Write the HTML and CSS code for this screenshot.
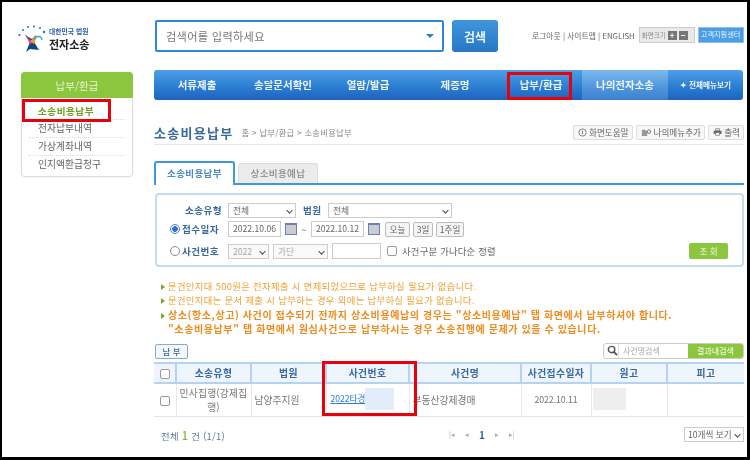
FILE: index.html
```html
<!DOCTYPE html>
<html lang="ko">
<head>
<meta charset="utf-8">
<title>소송비용납부</title>
<link rel="stylesheet" href="styles.css">
</head>
<body>
<div class="frame">
  <div class="page">
    <aside class="side">
      <div class="logo">
        <svg class="logo-mark" viewBox="0 0 28 27" width="28" height="27">
          <g fill="#2a6fbb"><circle cx="1.5" cy="10" r="1.1"/><circle cx="5" cy="5" r="1"/><circle cx="10" cy="2" r="1"/><circle cx="16" cy="1.5" r="1"/><circle cx="22" cy="3" r="1"/><circle cx="26" cy="7" r="1.2"/></g>
          <path d="M7 10 L14 14 L18 10 L16 17 L21 25 L12 24 L8 27 L12 17 Z" fill="#16457e"/>
          <path d="M7 9 L15 18 L12 19 Z" fill="#e0398a"/>
          <path d="M12 16 L19 10 L16 19 Z" fill="#f39a1e"/>
          <path d="M17 15 a3.5 3.5 0 0 1 7 0" fill="none" stroke="#3aa7d8" stroke-width="1.3"/>
        </svg>
        <div class="logo-text"><span class="logo-small">대한민국 법원</span><span class="logo-big">전자소송</span></div>
      </div>
      <nav class="side-box">
        <h2 class="side-head">납부/환급</h2>
        <ul class="side-list">
          <li class="on">소송비용납부</li>
          <li>전자납부내역</li>
          <li>가상계좌내역</li>
          <li>인지액환급청구</li>
        </ul>
      </nav>
    </aside>
    <main class="main">
      <div class="top">
        <div class="searchbox"><span>검색어를 입력하세요</span><i class="caret"></i></div>
        <button class="search-btn">검색</button>
        <div class="toplinks">
          <span>로그아웃 | 사이트맵 | ENGLISH</span>
          <span class="zoombox">화면크기 <b>+</b><b>−</b></span>
          <span class="help">고객지원센터</span>
        </div>
      </div>
      <nav class="gnb">
        <a class="g1">서류제출</a><a class="g2">송달문서확인</a><a class="g3">열람/발급</a><a class="g4">제증명</a><a class="g5">납부/환급</a><a class="g6">나의전자소송</a><a class="g7">✦ 전체메뉴보기</a>
      </nav>
      <div class="titlebar">
        <h1>소송비용납부</h1>
        <span class="crumb">홈 &gt; 납부/환급 &gt; 소송비용납부</span>
        <div class="tools">
          <span class="tool"><svg viewBox="0 0 10 10" width="9" height="9"><circle cx="5" cy="5" r="4" fill="none" stroke="#777"/><path d="M5 3v4" stroke="#777"/></svg>화면도움말</span>
          <span class="tool"><svg viewBox="0 0 12 10" width="11" height="9"><path d="M1 9V2h4v1h2v6z" fill="#999"/><circle cx="9" cy="4" r="2" fill="none" stroke="#666"/></svg>나의메뉴추가</span>
          <span class="tool"><svg viewBox="0 0 14 10" width="13" height="10"><path d="M4 0h6v3H4z" fill="none" stroke="#666"/><path d="M1 3h12v5H1z" fill="#666"/><path d="M4 6h6v4H4z" fill="#fff" stroke="#666"/></svg>출력</span>
        </div>
      </div>
      <div class="tabs">
        <span class="tab on">소송비용납부</span>
        <span class="tab">상소비용예납</span>
      </div>
      <form class="filter">
        <div class="f-row r1">
          <label class="f-label l1">소송유형</label>
          <span class="sel w68">전체<i></i></span>
          <label class="f-label court">법원</label>
          <span class="sel w124">전체<i></i></span>
        </div>
        <div class="f-row r2">
          <span class="radio on"></span><label class="f-label dt">접수일자</label>
          <span class="inp">2022.10.06</span><i class="cal"></i><span class="tilde">~</span><span class="inp">2022.10.12</span><i class="cal"></i>
          <span class="mini m1">오늘</span><span class="mini m2">3일</span><span class="mini m3">1주일</span>
        </div>
        <div class="f-row r3">
          <span class="radio"></span><label class="f-label dt">사건번호</label>
          <span class="sel dim w41">2022<i></i></span><span class="sel dim w55">가단<i></i></span><span class="inp blank"></span>
          <span class="check"></span><span class="sort">사건구분 가나다순 정렬</span>
          <button type="button" class="query">조 회</button>
        </div>
      </form>
      <ul class="notes">
        <li>문건인지대 500원은 전자제출 시 면제되었으므로 납부하실 필요가 없습니다.</li>
        <li>문건인지대는 문서 제출 시 납부하는 경우 외에는 납부하실 필요가 없습니다.</li>
        <li class="strong">상소(항소,상고) 사건이 접수되기 전까지 상소비용예납의 경우는 "상소비용예납" 탭 화면에서 납부하셔야 합니다.<br>"소송비용납부" 탭 화면에서 원심사건으로 납부하시는 경우 소송진행에 문제가 있을 수 있습니다.</li>
      </ul>
      <div class="listbar">
        <span class="pay">납 부</span>
        <div class="find">
          <span class="lens"><svg viewBox="0 0 12 12" width="11" height="11"><circle cx="5" cy="5" r="3.5" fill="none" stroke="#555" stroke-width="1.6"/><path d="M7.5 7.5L11 11" stroke="#555" stroke-width="2"/></svg></span>
          <span class="find-text">사건명검색</span>
          <span class="find-btn">결과내검색</span>
        </div>
      </div>
      <table class="grid">
        <colgroup><col class="c0"><col class="c1"><col class="c2"><col class="c3"><col class="c4"><col class="c5"><col class="c6"><col class="c7"></colgroup>
        <thead><tr><th><span class="check"></span></th><th>소송유형</th><th>법원</th><th>사건번호</th><th>사건명</th><th>사건접수일자</th><th>원고</th><th>피고</th></tr></thead>
        <tbody><tr>
          <td class="ctr"><span class="check"></span></td>
          <td class="ctr">민사집행(강제집행)</td>
          <td>남양주지원</td>
          <td><a class="caselink">2022타경</a><span class="mask blue"></span></td>
          <td class="name">부동산강제경매</td>
          <td class="ctr date">2022.10.11</td>
          <td class="tight"><span class="mask gray"></span></td>
          <td></td>
        </tr></tbody>
      </table>
      <div class="foot">
        <span class="count">전체 <b>1</b> 건 (1/1)</span>
        <span class="pager"><i>|◂</i><i>◂</i><b>1</b><i>▸</i><i>▸|</i></span>
        <span class="sel perpage">10개씩 보기<i></i></span>
      </div>
    </main>
  </div>
  <div class="mark mark-side"></div>
  <div class="mark mark-gnb"></div>
  <div class="mark mark-col"></div>
</div>
</body>
</html>
```
FILE: styles.css
```css
* { box-sizing: border-box; }
html, body { margin: 0; padding: 0; }
body { width: 750px; height: 460px; overflow: hidden; background: #000; font-family: "Noto Sans CJK KR", "Noto Sans", sans-serif; font-size: 10px; color: #666; }
.frame { position: relative; width: 750px; height: 460px; border: solid #000; border-width: 2px 3px 3px 2px; background: #fff; overflow: hidden; }
.page { display: flex; height: 100%; padding-left: 19px; filter: blur(0.35px); }
ul { list-style: none; margin: 0; padding: 0; }
h1, h2 { margin: 0; font-weight: 700; }
i { font-style: normal; }

.side { width: 112px; flex: none; margin-right: 21px; }
.logo { display: flex; gap: 3px; align-items: center; height: 30px; margin: 21px 0 19px -3px; }
.logo-text { display: flex; flex-direction: column; line-height: 12px; }
.logo-small { font-size: 6.8px; font-weight: 700; color: #2a5caa; white-space: nowrap; }
.logo-big { font-size: 11px; font-weight: 700; color: #222; white-space: nowrap; line-height: 14px; }
.side-box { border: 1px solid #ddd; border-radius: 4px; height: 105px; box-shadow: 0 0 1px #ccc; }
.side-head { height: 26px; margin: -1px; background: #8cc63f; color: #e9f5d5; border-radius: 4px 4px 0 0; font-size: 10.5px; line-height: 27px; text-align: center; font-weight: 400; }
.side-list { padding: 2px 7px 0; }
.side-list li { height: 18px; line-height: 16px; font-size: 9.8px; padding-left: 9px; color: #666; border-top: 1px dotted #ddd; white-space: nowrap; }
.side-list li:first-child { border-top: 0; height: 20px; padding-top: 4px; }
.side-list li.on { color: #6d9f1c; font-weight: 700; letter-spacing: .5px; font-size: 9.6px; }
.side-list li:last-child { height: 17px; }

.main { width: 590px; flex: none; }
.top { display: flex; align-items: flex-start; padding-top: 18px; height: 68px; margin-left: 1px; }
.searchbox { width: 289px; height: 32px; border: 2px solid #2f86d8; border-radius: 2px; display: flex; align-items: center; justify-content: space-between; padding: 0 8px 0 9px; font-size: 11.2px; color: #777; letter-spacing: .3px; }
.caret { width: 0; height: 0; border: 4px solid transparent; border-top: 4px solid #2f7fd0; border-bottom: 0; }
.search-btn { margin-left: 8px; width: 46px; height: 32px; border: 0; border-radius: 3px; background: linear-gradient(#3f96dc, #2877c4); color: #eaf4fc; font: 700 12px "Noto Sans CJK KR", sans-serif; padding: 0; }
.toplinks { display: flex; align-items: center; margin-left: 34px; height: 16px; margin-top: 7px; font-size: 7.8px; white-space: nowrap; color: #666; }
.zoombox { display: flex; align-items: center; gap: 1px; width: 56px; height: 16px; margin-left: 4px; padding: 0 2px; background: #e9e9e9; border: 1px solid #ccc; font-size: 6.5px; color: #888; }
.zoombox b { width: 9px; height: 9px; background: #777; color: #fff; line-height: 8px; text-align: center; font-size: 8px; margin-left: 1px; }
.help { margin-left: 3px; height: 16px; padding: 0 2px; background: #4b9ee6; border: 1px solid #8cc0ee; color: #e8f4ff; font-size: 7.2px; line-height: 13px; width: 46px; overflow: hidden; }

.gnb { display: flex; height: 30px; width: 589px; background: linear-gradient(#4ba0e8, #2a7bd0 60%, #1e62c0); border-radius: 3px; color: #eef6fd; font-size: 10.5px; font-weight: 700; line-height: 30px; text-align: center; overflow: hidden; }
.gnb a { display: block; white-space: nowrap; }
.g1 { width: 86px; } .g2 { width: 86px; } .g3 { width: 84px; } .g4 { width: 90px; } .g5 { width: 82px; }
.g6 { width: 86px; background: linear-gradient(#7db9ee, #4e95dc 60%, #3d80d0); }
.g7 { width: 75px; font-size: 7.6px; }

.titlebar { display: flex; align-items: center; margin-top: 20px; height: 25px; width: 590px; border-bottom: 1px solid #e6e6e6; }
.titlebar h1 { font-size: 13px; color: #39699c; letter-spacing: 1.3px; white-space: nowrap; }
.crumb { margin-left: 8px; font-size: 8.4px; letter-spacing: .2px; color: #888; white-space: nowrap; }
.tools { margin-left: auto; display: flex; gap: 3px; }
.tool { display: flex; align-items: center; gap: 2px; height: 15px; padding: 0 3px 0 4px; background: #f7f7f7; border: 1px solid #ddd; border-radius: 2px; font-size: 8.6px; color: #666; white-space: nowrap; }
.tools .tool:first-child { width: 60px; } .tools .tool:nth-child(2) { width: 69px; } .tools .tool:last-child { width: 36px; }

.tabs { display: flex; align-items: flex-end; gap: 3px; margin-top: 16px; height: 24px; width: 590px; border-bottom: 2px solid #3f97e0; }
.tab { display: block; width: 80px; height: 20px; background: #ececec; border: 1px solid #ddd; border-bottom: 0; border-radius: 3px 3px 0 0; text-align: center; font-size: 9.6px; line-height: 18px; font-weight: 500; color: #888; letter-spacing: .3px; }
.tab.on { width: 81px; height: 24px; margin-bottom: -2px; background: #fff; border: 2px solid #3f97e0; border-bottom: 0; color: #4a8bc8; font-weight: 700; line-height: 21px; }

.filter { display: block; margin-top: 8px; margin-left: 1px; width: 589px; height: 74px; border: 2px solid #c4dcef; border-radius: 4px; padding: 6px 0 0; position: relative; }
.f-row { display: flex; align-items: center; padding-left: 13px; }
.r1 { height: 18px; } .r2 { height: 20px; } .r3 { height: 24px; }
.f-label { font-size: 9.6px; font-weight: 700; color: #39699c; letter-spacing: .4px; white-space: nowrap; }
.l1 { margin-left: 15px; width: 43px; }
.court { margin-left: 7px; width: 25px; }
.dt { width: 46px; }
.sel { position: relative; display: block; height: 15px; border: 1px solid #ccc; background: #fff; font-size: 8.6px; line-height: 12px; padding-left: 4px; color: #666; white-space: nowrap; flex: none; }
.sel i { position: absolute; right: 3px; top: 4px; width: 5px; height: 5px; border: solid #444; border-width: 0 1.3px 1.3px 0; transform: rotate(45deg) scale(.9); }
.w68 { width: 68px; } .w124 { width: 124px; }
.w41 { width: 41px; } .w55 { width: 55px; margin-left: 4px; }
.dim { color: #aaa; background: #f9f9f9; }
.radio { width: 10px; height: 10px; border-radius: 50%; border: 1px solid #888; margin-right: 2px; background: #fff; flex: none; }
.radio.on { border-color: #4a7fd0; background: radial-gradient(circle, #2f6fd0 45%, #fff 55%); }
.inp { display: block; width: 53px; height: 16px; border: 1px solid #ccc; font-size: 8.6px; line-height: 13px; text-align: center; color: #666; flex: none; }
.inp.blank { width: 49px; margin-left: 4px; background: #fff; }
.cal { width: 12px; height: 12px; margin-left: 4px; background: #ccc; border: 1px solid #6a7fc0; border-top-width: 2px; flex: none; }
.tilde { width: 14px; text-align: center; color: #888; }
.mini { height: 15px; border: 1px solid #bbb; border-radius: 2px; background: #f5f5f5; font-size: 8.6px; line-height: 12px; text-align: center; white-space: nowrap; flex: none; }
.m1 { width: 25px; margin-left: 5px; } .m2 { width: 20px; margin-left: 3px; } .m3 { width: 28px; margin-left: 3px; }
.check { display: inline-block; width: 10px; height: 10px; border: 1px solid #999; border-radius: 2px; background: #fff; vertical-align: middle; }
.f-row .check { margin: 0 5px 0 6px; }
.sort { font-size: 9.4px; color: #666; white-space: nowrap; letter-spacing: .2px; }
.query { position: absolute; right: 14px; bottom: 6px; width: 39px; height: 16px; border: 0; border-radius: 2px; background: #8cc63f; color: #eaf6da; font: 400 8.6px "Noto Sans CJK KR", sans-serif; padding: 0; }

.notes { margin-top: 12px; padding-left: 7px; height: 57px; font-size: 9.3px; line-height: 14.3px; color: #f0a030; width: 590px; }
.notes li { position: relative; padding-left: 7px; white-space: nowrap; letter-spacing: .38px; }
.notes li::before { content: ""; position: absolute; left: 0; top: 5px; width: 0; height: 0; border: 3px solid transparent; border-left: 4px solid #7aa82a; border-right: 0; }
.notes li.strong { color: #f08a1a; font-weight: 700; font-size: 10px; letter-spacing: .6px; }

.listbar { display: flex; justify-content: space-between; align-items: center; width: 590px; height: 16px; margin-top: 7px; }
.pay { width: 33px; height: 15px; margin-left: 1px; border: 1px solid #8aa8c8; border-radius: 2px; background: #f4f8fb; color: #39699c; font-size: 8.4px; font-weight: 500; line-height: 12px; text-align: center; }
.find { display: flex; height: 16px; width: 141px; border: 1px solid #ccc; border-radius: 3px; font-size: 8px; line-height: 14px; overflow: hidden; }
.lens { width: 15px; padding: 1px 0 0 3px; border-right: 1px solid #ddd; }
.find-text { flex: 1; padding-left: 4px; color: #aaa; white-space: nowrap; }
.find-btn { width: 55px; background: #8cc63f; color: #e8f5d5; text-align: center; font-weight: 500; white-space: nowrap; }

.grid { width: 590px; margin-top: 3px; border-collapse: collapse; table-layout: fixed; font-size: 9.8px; }
.c0 { width: 22px; } .c1 { width: 75px; } .c2 { width: 75px; } .c3 { width: 83px; } .c4 { width: 112px; } .c5 { width: 70px; } .c6 { width: 76px; } .c7 { width: 77px; }
.grid th { height: 20px; padding: 0; background: #eef5fc; border-top: 2px solid #b4d3f0; border-bottom: 2px solid #b4d3f0; border-left: 2px solid #b4d3f0; color: #39699c; font-size: 9.8px; font-weight: 700; letter-spacing: .4px; white-space: nowrap; }
.grid th:first-child { border-left: 0; }
.grid td { height: 33px; padding: 0 3px; border-left: 1px solid #e3e9ee; border-bottom: 1px solid #dfe5ea; color: #777; line-height: 14px; vertical-align: middle; white-space: nowrap; overflow: hidden; }
.grid td:first-child { border-left: 0; }
.grid td.ctr { text-align: center; white-space: normal; letter-spacing: .2px; }
.grid td.date { font-size: 8.8px; letter-spacing: -.1px; }
.grid td.tight { padding: 0 1px; }
.grid td.name { padding: 0 3px; }
.caselink { color: #2b7bd8; text-decoration: underline; font-size: 8.6px; margin-left: 1px; }
.mask { display: inline-block; vertical-align: middle; height: 22px; margin-top: -2px; }
.mask.blue { width: 29px; background: #e3edf9; }
.mask.gray { width: 33px; background: #eee; }

.foot { display: flex; align-items: center; justify-content: space-between; width: 590px; height: 16px; margin-top: 10px; padding: 0 0 0 7px; position: relative; }
.count { font-size: 9.4px; color: #5c7a96; letter-spacing: .3px; white-space: nowrap; }
.count b { color: #8cb43c; font-size: 11px; font-weight: 500; }
.pager { position: absolute; left: 295px; top: 0; display: flex; gap: 10px; align-items: center; font-size: 7px; color: #aaa; }
.pager b { color: #39699c; font-size: 10px; }
.perpage { width: 60px; height: 15px; padding-left: 3px; letter-spacing: 0; }

.mark { position: absolute; border: 3px solid #e8000b; }
.mark-side { left: 20px; top: 97px; width: 89px; height: 23px; }
.mark-gnb { left: 505px; top: 70px; width: 65px; height: 28px; }
.mark-col { left: 320px; top: 359px; width: 95px; height: 55px; }
```
